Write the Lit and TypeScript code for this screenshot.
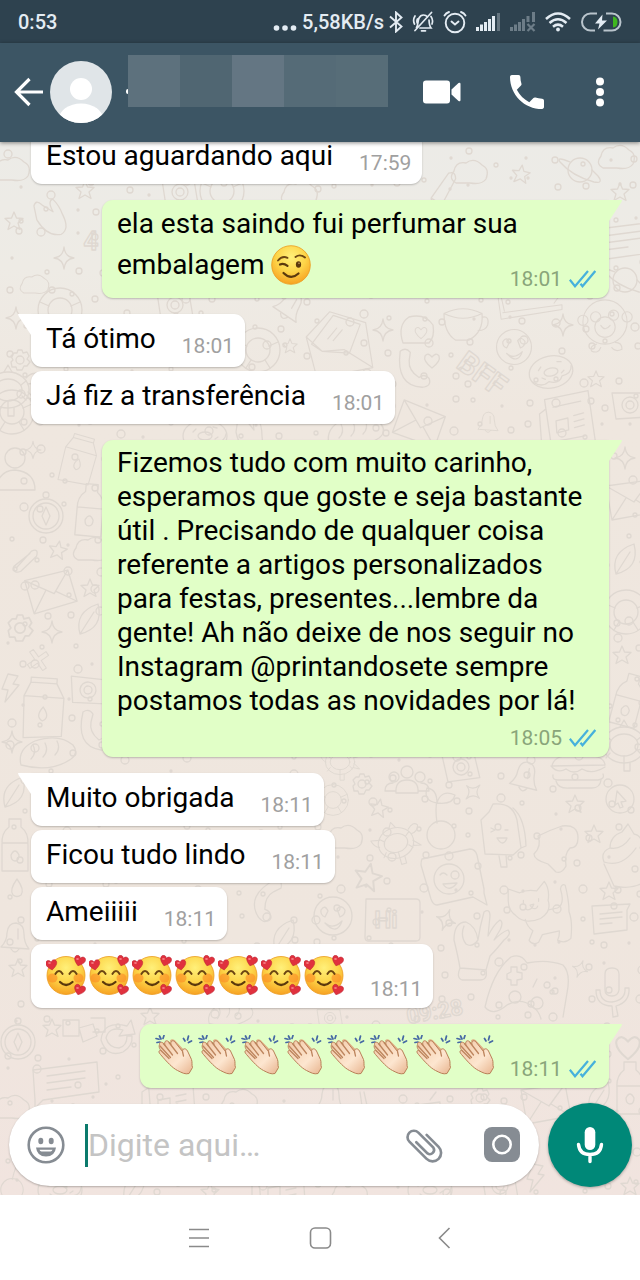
import { LitElement, html, svg, css } from "lit";
import { customElement } from "lit/decorators.js";

type Emoji = "wink" | "love" | "clap";

interface Message {
  from: "me" | "them";
  layout: "row" | "overlay" | "below";
  time: string;
  text?: string;
  emoji?: Emoji;
  count?: number;
  tail?: boolean;
}

const MESSAGES: Message[] = [
  { from: "them", layout: "row", time: "17:59", text: "Estou aguardando aqui" },
  { from: "me", layout: "overlay", time: "18:01", text: "ela esta saindo fui perfumar sua embalagem", emoji: "wink", count: 1, tail: true },
  { from: "them", layout: "row", time: "18:01", text: "Tá ótimo", tail: true },
  { from: "them", layout: "row", time: "18:01", text: "Já fiz a transferência" },
  {
    from: "me",
    layout: "below",
    time: "18:05",
    tail: true,
    text: "Fizemos tudo com muito carinho, esperamos que goste e seja bastante útil . Precisando de qualquer coisa referente a artigos personalizados para festas, presentes...lembre da gente! Ah não deixe de nos seguir no Instagram @printandosete sempre postamos todas as novidades por lá!",
  },
  { from: "them", layout: "row", time: "18:11", text: "Muito obrigada", tail: true },
  { from: "them", layout: "row", time: "18:11", text: "Ficou tudo lindo" },
  { from: "them", layout: "row", time: "18:11", text: "Ameiiiii" },
  { from: "them", layout: "row", time: "18:11", emoji: "love", count: 7 },
  { from: "me", layout: "row", time: "18:11", emoji: "clap", count: 8, tail: true },
];

/* ---------- emoji ---------- */

const heart = (x: number, y: number, r: number) => svg`
  <path transform="translate(${x} ${y}) rotate(${r})" fill="#e0313e" stroke="#b81f30" stroke-width=".5"
    d="M0 5C-5 1.500-6-1-5.300-3.200C-4.400-5.600-1-5.400 0-2.800C1-5.400 4.400-5.600 5.300-3.200C6-1 5 1.500 0 5Z"/>
  <ellipse cx="${x - 2}" cy="${y - 2}" rx="1.400" ry=".9" fill="#f57a80"/>`;

const emojiArt = {
  wink: svg`
    <circle cx="20" cy="20" r="19.300" fill="url(#face)" stroke="#eb9a1e" stroke-width=".8"/>
    <path d="M7 15.500Q11 10.500 16.500 12.800" fill="none" stroke="#6b4512" stroke-width="1.900" stroke-linecap="round"/>
    <path d="M24.500 12Q29 8.500 34 12.500" fill="none" stroke="#6b4512" stroke-width="1.900" stroke-linecap="round"/>
    <path d="M9 19.500Q12.500 17.800 16.500 20.800" fill="none" stroke="#5b390d" stroke-width="2.200" stroke-linecap="round"/>
    <ellipse cx="27.500" cy="19.500" rx="2.600" ry="3.300" fill="#5b390d"/>
    <circle cx="28" cy="18.300" r=".8" fill="#c9a06a"/>
    <path d="M12.500 28Q20 35.500 27.500 28.500" fill="none" stroke="#5b390d" stroke-width="2.200" stroke-linecap="round"/>`,
  love: svg`
    <circle cx="20" cy="20.500" r="19" fill="url(#face)" stroke="#eb9a1e" stroke-width=".8"/>
    <ellipse cx="6.500" cy="23" rx="5" ry="4.500" fill="#fb8a24" opacity=".6"/>
    <ellipse cx="32.500" cy="23" rx="5" ry="4.500" fill="#fb8a24" opacity=".6"/>
    <path d="M9.500 18.800Q13 13.300 16.500 18.800M23.500 18.800Q27 13.300 30.500 18.800" fill="none" stroke="#6b4512" stroke-width="2.100" stroke-linecap="round"/>
    <path d="M14 27Q20 33 26.500 27" fill="none" stroke="#5b390d" stroke-width="2.300" stroke-linecap="round"/>
    ${heart(5.5, 10, -8)}${heart(33.5, 6, 18)}${heart(33.5, 35, 18)}`,
  clap: svg`
    <path d="M1 3.500l3 .8M4.500 1l1.500 3M9 .5l-1 3M2 7.500l3-.5M28.500 3.500l1.500 2.500M33.500 1l-1 4M36.500 6l-3 1.500" stroke="#4568a4" stroke-width="1.700" stroke-linecap="round" fill="none"/>
    <path d="M15 5.500C17 3 20 5 21.500 7L33 19L37 31L31 38L22 32Z" fill="#dfae84"/>
    <path d="M4.500 9.500C4 7 7 6.500 8.500 8.500L10 10.500C9 7 10.500 4.500 13.500 6.500L16 9.500C15 6 18 4.500 20 7L27.500 16.500C27.500 13 31 13 32.500 16L36.500 24.500C37.500 27.500 36.500 30 37.500 32.500L34 38.500C30 39.500 27.500 38 22.500 35.500C17.500 33 12 27 5.500 19.500C2.500 16.500 4.500 14.500 6.500 16C3 12.500 4.500 10 4.500 9.500Z" fill="url(#skin)" stroke="#b98058" stroke-width="1" stroke-linejoin="round"/>
    <path d="M8.500 8.500L17.500 20M14 7.500L22.500 18.500M6.500 16L14 23.500M5 11L15.500 22.500M27.500 16.500L28.500 21" stroke="#bd855e" stroke-width="1.300" stroke-linecap="round" fill="none"/>`,
};

const EMOJI_NAMES: Record<Emoji, string> = { wink: "piscando", love: "sorriso com corações", clap: "palmas" };

/* ---------- wallpaper doodles ---------- */

const at = (x: number, y: number, art: unknown, rot = 0, scale = 1) =>
  svg`<g transform="translate(${x} ${y}) rotate(${rot}) scale(${scale})">${art}</g>`;
const p = (d: string) => svg`<path d=${d}/>`;
const c = (x: number, y: number, r: number) => svg`<circle cx=${x} cy=${y} r=${r}/>`;

const D = {
  star: p("M0-9L2.500-3L9-2.500L4 2L6 8.500L0 5L-6 8.500L-4 2L-9-2.500L-2.500-3Z"),
  sparkle: p("M0-11Q1-1 10 0Q1 1 0 11Q-1 1-10 0Q-1-1 0-11Z"),
  gear: svg`${c(0, 0, 4)}${p("M-2-10H2L3-7L7-8L9-4L7-1L10 2L7 6L4 6L2 10H-3L-4 7L-8 7L-9 2L-7 0L-9-4L-6-7L-3-7Z")}`,
  people: svg`${c(-13, -3, 5)}${c(0, -8, 6)}${c(13, -3, 5)}${p("M-11 13Q-12 0 0 0Q12 0 11 13ZM-12 11H-22Q-22 3-14 3M12 11H22Q22 3 14 3")}`,
  camera: svg`${p("M-18-12H14L18 12L-14 14Z")}${c(0, 0, 8)}${c(0, 0, 4)}`,
  bell: p("M-14 10Q-8 4-8-4Q-7-14 1-14Q9-13 9-3Q9 6 14 12ZM-4 12Q0 18 4 12M3-8V2"),
  burger: p("M-26-6Q-24-18 0-17Q26-18 27-7ZM-27-6Q-20 2-12-3Q-4 3 4-3Q14 3 27-5M-25 3Q-26 8-20 8H20Q27 7 25 2M-22 9Q-20 17-8 16H14Q22 16 23 8"),
  compass: svg`${c(0, 0, 17)}${c(0, 0, 13)}${c(0, -21, 3)}${p("M0-9L4 0L0 9L-4 0Z")}`,
  cursor: svg`${c(0, 0, 14)}${p("M-3-8L6 2L1 3L3 8L0 9L-2 4L-5 6Z")}`,
  turtle: svg`<ellipse rx="21" ry="18"/><ellipse rx="14" ry="11"/>${p("M18-12Q26-20 30-14Q28-6 20-6M-18-8L-28-10Q-26-2-20 0M0 18V26H6V18M-4-18L0-25L4-18M19 8L28 10L20 2M-14 8L-18 13M0 11V18M14 6L18 10M13-5L18-9M-13-5L-18-9")}`,
  plant: svg`${c(4, 22, 14)}${p("M0 10Q-2-4 0-12M0-10Q-14-12-10-25Q0-24 0-10Q4-24 18-18Q16-8 0-10")}`,
  popsicle: p("M-18 20L-22-14L-14-22L-10-30Q10-32 14-14L18 14L10 21ZM10-26Q22-16 23 12L18 14M-4 22L-2 33H4L3 21M-12-6L-8-4L-12-2M2-4H5M-6 4Q0 14 4 4Z"),
  tooth: p("M-18-14Q-6-20 6-24Q22-26 22-12Q22-2 14-2Q8 4 10 16Q6 24 0 22L-8 14Q-22 10-22 4Q-14-4-18-14Z"),
  faceNote: svg`${p("M-31-20L17-30Q22-30 24-24L31 10V14L34 26L20 18L-16 26Q-20 26-22 20L-32-14Q-32-18-31-20")}${c(-4, 0, 15)}${p("M-13-4Q-10-8-6-4M-10 5Q-4 14 4 4Z")}${c(2, -4, 4)}`,
  cat: p("M-24-8L-24-20L-12-16Q-4-20 6-18L14-28Q20-20 18-8Q22 4 10 11Q-6 18-16 8Q-24 2-24-8ZM-8-8V-5M8-10V-7M-1-3L3-4L1 0ZM1 0Q-4 4-6 0M1 0Q6 2 7-2M-6 12Q-4 20 2 24L-2 34Q2 40 8 36L12 28L30 24Q30 30 28 34Q36 38 42 32Q44 14 40 4Q40-8 36-24Q32-26 31-20Q36-4 28 0L18 2"),
  smile: svg`${c(0, 0, 19)}${p("M-12-6Q-8-12-5-5L-8 1Q-13-1-12-6ZM4-7Q8-12 12-6Q12-1 7 1ZM-8 7Q0 14 9 5Q4 20-8 7Z")}`,
  box: p("M-26-20H24Q28-20 28-16V18Q28 22 24 22H-24Q-27 22-27 18Z"),
  ok: p("M-16 24Q-18 12-22-4Q-22-22-10-22Q0-18 2-4Q-4 4-10 0Q-16-8-12-18M2-4Q4-18 8-32Q14-36 14-28L12-8Q18-20 24-24Q28-22 24-14L18-4Q26-12 32-14Q36-10 28-4Q20 6 14 12L10 26M-16 24Q-20 34-14 36H4Q12 36 10 26Z"),
  note: p("M-18-14L20-16L17-10V10L-16 14ZM-10-6L12-8M-10-1L12-3M-10 4L2 3"),
  gamepad: svg`${p("M-42 24Q-34-12-16-26Q-6-30 0-20Q20-24 36-18Q44-10 40 10L36 34M-42 24Q-34 34-20 22Q-6 14 6 24Q12 28 14 36M-16-16L-10-16V-11L-5-10V-4L-10-3V2L-16 2V-3L-20-4V-9L-16-11Z")}${c(-12, 14, 6)}${c(10, 20, 6)}${c(20, 2, 3)}${c(28, 8, 3)}${p("M6 4L10-4")}`,
  mic: p("M-7-18Q-7-24 0-24Q7-24 7-18V-2Q6 4 0 4Q-7 4-7-2ZM-12-2Q-12 10 0 10Q14 8 13-4L17-4Q18 10 4 14L6 24L1 25L0 14Q-16 14-16-2Z"),
  cupcake: p("M-18 6Q-22-4-12-8Q-12-20 0-24L6-32L12-22Q22-20 18-8L24 2M-18 6Q0 12 14-8M-12-8Q0-6 8-18M-18 8L-8 30Q10 34 22 26"),
  letter: p("M-32-10L-6-38L34-26L42 24L-20 36ZM-26-2L-2-34L28-24L16 8L-14 6ZM-32-10L-14 6L10 4L42 24M-8-8L2-20M-2-6L8-18"),
  heart: p("M0 7Q-9 0-7-5Q-4-9 0-4Q4-9 7-5Q9 0 0 7Z"),
  head: svg`${p("M-14 12Q-20-6-8-14Q8-18 16-6Q18 6 12 12Z")}`,
  cup: p("M-20-10Q0-20 20-10Q22 10 6 18H-8Q-20 10-20-10ZM-20-10Q0 0 20-10M20-6Q28-8 26 2Q24 8 16 8"),
  laptop: p("M-40-14L-36 14L40 2V-4L-34 6M-36-14L-32 4M36-14L30-6"),
  monkey: svg`${c(0, 0, 26)}${c(-11, -6, 6)}${c(10, -8, 6)}${c(-26, -2, 6)}${c(26, -6, 6)}${c(0, 6, 12)}${p("M-5 4Q0 12 6 4M-10 26Q-18 28-16 34Q-8 38-5 30M12 24Q20 24 20 32Q12 36 8 30")}`,
  phone: p("M-12-18Q-6-22-2-16L-4-8Q-6 2 4 10Q10 6 14 12Q16 20 6 20Q-20 16-12-18Z"),
  donut: svg`<ellipse rx="22" ry="16"/><ellipse rx="7" ry="4"/>${p("M-20 6Q-12 14-4 9Q6 14 10 6Q20 6 21-2M-12-4L-9-7M8-9L12-8M10 3L13 1M-10 4L-7 6")}`,
  news: p("M-22-22L22-28L26 26L-18 30ZM-22-12L-28-8V24Q-24 32-18 30M-14-14L14-18M-12 0L0-2V10L-12 12ZM6-4L16-6M6 2L16 0M6 8L16 6M-10 20L16 17"),
  envelope: p("M-24-14L20-20L26 12L-18 20ZM-24-14L4 2L20-20M-18 20L-4-2M26 12L6 0"),
  cloud: p("M-14 10Q-22 6-16-2Q-14-12-4-10Q4-16 12-8Q20-4 16 6Q12 12 0 10Z"),
  planet: svg`${c(0, 0, 12)}${p("M-10-8Q-24-14-20-8Q-8 6 14 12Q24 14 18 6L12 0")}`,
  pencil: p("M-4 20L-8 10L4-18Q10-22 12-14L4 14ZM-8 10L4 14"),
  leaf: p("M-10 14Q-16-8 8-16Q14 8-10 14ZM-10 14L4-8"),
  bottle: p("M-6-26H6V-18Q14-12 13 0V26H-13V0Q-14-12-6-18ZM-13-2H13M-4 10Q0 2 4 10Q4 16 0 16Q-4 16-4 10Z"),
  drop: p("M0-9Q8 2 4 7Q0 10-4 7Q-8 2 0-9Z"),
  carton: p("M-20-14L-14-28H12L20-14V24L-18 28ZM-20-14H20M-14-28V-33H12V-28M0-4Q8 6 0 10Q-8 6 0-4Z"),
  cross: p("M-8-12L0-4L8-12L12-8L4 0L12 8L8 12L0 4L-8 12L-12 8L-4 0L-12-8Z"),
  bolt: p("M-2-14L8-12L3-4L9-3L-5 14L-2 2L-8 1Z"),
  bread: p("M-26 12Q-30-4-12-12Q12-20 26-8Q32 0 24 6Q4 20-26 12ZM-14-8Q-10 0-16 6M-2-10Q2-2-4 4M10-12Q14-4 8 2"),
  person: svg`${c(0, -12, 10)}${p("M-20 20Q-16 0 0 0Q20 2 20 20Z")}`,
  clip: p("M-12 6L6-8Q14-10 10-2L-8 10Q-16 12-14 4L4-6"),
  refresh: p("M10-12Q-14-18-16 2Q-10 20 6 14Q16 8 15-2L10-2Q10 8 2 10Q-8 10-11 0Q-8-12 6-8L2-2L18-4L14-18Z"),
  blocks: p("M-22-12H-6V4H-22ZM-6-4L8-8L12 4L-2 10ZM6-14H20V0H8"),
  card: p("M-32-10L32-18L34 12L-22 20L-30 28L-30 20ZM-18-4L20-9M-18 3L20-2M-18 10L6 7"),
  hand: p("M-12-14Q-8-20-4-12L4-2Q2-14 8-14Q12-6 12 4Q14 20 4 22Q-10 20-14 0Z"),
  life: svg`${c(0, 0, 22)}${c(0, 0, 12)}${p("M-20-8L-11-4M20-8L11-4M-12 18L-7 10M12 18L7 10")}`,
};

const word = (t: string, x: number, y: number, rot: number, size: number) =>
  svg`<text class="scribble" transform="translate(${x} ${y}) rotate(${rot})" font-size=${size} text-anchor="middle">${t}</text>`;

const DOODLES = [
  at(470, 173, D.cloud), at(521, 174, D.star, 8), at(580, 170, D.planet), at(617, 158, D.cloud), at(441, 190, D.pencil, 12),
  at(222, 191, D.life), at(180, 192, D.camera), at(300, 194, D.cloud), at(14, 221, D.star), at(50, 215, D.hand, -20),
  at(35, 285, D.cloud, 0, 0.8), at(12, 170, D.cloud), at(64, 258, D.sparkle), word("4", 91, 250, 0, 26), at(85, 190, D.star),
  at(620, 192, D.star), at(622, 240, D.card), at(625, 280, D.planet), at(16, 318, D.sparkle), at(60, 310, D.life), at(290, 305, D.bell, 30), at(175, 305, D.camera),
  at(8, 390, D.turtle), at(20, 360, D.gear), at(258, 350, D.life), at(335, 346, D.letter, 0, 0.9), at(383, 330, D.sparkle),
  at(417, 331, D.head), at(421, 333, D.heart, 0, 0.8), at(463, 323, D.cup, 0, 0.95), at(530, 308, D.laptop, 0, 0.8), at(605, 322, D.monkey, 0, 0.85),
  at(514, 347, D.smile, 0, 0.92), at(414, 368, D.phone, -6), at(432, 361, D.heart), word("BFF", 476, 382, 36, 30),
  at(551, 372, D.donut, -12), at(568, 420, D.news, -4), at(290, 346, D.star, 0, 0.8), at(596, 379, D.star, 0, 0.9), at(563, 325, D.sparkle),
  at(418, 424, D.envelope, 30), at(488, 422, D.bell, 0, 0.7), at(630, 405, D.camera), at(355, 432, D.bread), at(250, 432, D.hand), at(205, 436, D.donut), at(12, 412, D.life),
  at(15, 470, D.person), at(33, 450, D.sparkle, 0, 0.8), at(78, 462, D.carton, 16, 0.8), at(46, 516, D.compass), at(90, 510, D.bottle, 5), at(27, 560, D.clip, -10),
  at(58, 550, D.star, 10), at(92, 550, D.cloud), at(50, 592, D.envelope, -6), at(90, 588, D.star), at(20, 628, D.gear, 0, 1.3), at(52, 632, D.sparkle),
  at(90, 620, D.leaf), at(38, 660, D.cross, 10, 0.8), at(10, 688, D.bolt), at(43, 711, D.carton, 4), at(88, 690, D.camera, 6), at(95, 730, D.phone), at(47, 753, D.bread), at(12, 742, D.sparkle),
  at(625, 458, D.sparkle), at(630, 500, D.envelope), at(626, 560, D.leaf), at(626, 612, D.life), at(622, 655, D.star), at(628, 700, D.bottle, 15), at(624, 745, D.turtle),
  at(15, 793, D.leaf), at(15, 845, D.bottle), at(17, 888, D.drop), at(15, 937, D.bell), at(18, 968, D.star),
  at(340, 762, D.turtle, 0, 0.7), at(333, 800, D.life, 0, 0.7), at(362, 784, D.gear), at(407, 780, D.people), at(461, 767, D.camera, -4), at(473, 792, D.sparkle, 45, 0.9), at(525, 776, D.bell, 10),
  at(578, 772, D.burger), at(620, 799, D.cursor), at(379, 808, D.star, 10), at(575, 804, D.star), at(594, 834, D.star), at(609, 891, D.star),
  at(368, 877, D.star, 12, 1.5), at(396, 843, D.turtle, -15, 0.85), at(437, 813, D.plant), at(503, 834, D.popsicle), at(556, 850, D.tooth),
  at(453, 879, D.faceNote), at(531, 908, D.cat, 0, 0.95), at(333, 916, D.smile), at(392, 919, D.box), word("Hi", 386, 928, 0, 24), at(446, 920, D.sparkle, 20),
  at(476, 944, D.ok), at(610, 920, D.note), at(527, 983, D.gamepad), at(612, 992, D.mic), at(622, 856, D.cupcake), at(580, 969, D.sparkle, 20, 0.8),
  word("09:28", 436, 1019, -10, 22), at(345, 838, D.cloud), at(270, 900, D.phone, 50), at(285, 936, D.leaf),
  at(18, 1042, D.compass), at(52, 1028, D.star), at(85, 1032, D.blocks), at(117, 1038, D.refresh), at(65, 1080, D.card), at(150, 1016, D.star), at(230, 1014, D.bread, 0, 0.8),
  at(330, 1018, D.camera, 0, 0.7), at(628, 1048, D.heart, 0, 1.6), at(630, 1088, D.bottle), at(12, 1108, D.cloud), at(170, 1100, D.news), at(240, 1102, D.cloud), at(330, 1098, D.bell),
  at(400, 1106, D.laptop), at(480, 1098, D.gear), at(545, 1104, D.envelope), at(600, 1098, D.leaf), at(15, 1172, D.plant, 20, 0.8), at(60, 1190, D.donut), at(135, 1188, D.leaf), at(210, 1192, D.star),
  at(280, 1188, D.news), at(350, 1194, D.cloud), at(430, 1190, D.donut), at(500, 1186, D.camera), at(535, 1178, D.bolt), at(630, 1186, D.star),
];

/* Small rings and dots that fill the space between the doodles, on a jittered grid. */
const RINGS = (() => {
  const out: unknown[] = [];
  let seed = 17;
  const next = () => (seed = (seed * 16807) % 2147483647) / 2147483647;
  for (let y = 150; y < 1195; y += 27) {
    for (let x = 8; x < 640; x += 27) {
      out.push(c(Math.round(x + next() * 18), Math.round(y + next() * 18), 1 + Math.round(next() * 3)));
    }
  }
  return out;
})();

@customElement("app-root")
export class AppRoot extends LitElement {
  static styles = css`
    :host {
      display: flex;
      flex-direction: column;
      height: 100vh;
      font-family: Roboto, "Liberation Sans", sans-serif;
      background: #fff;
      color: #000;
    }
    *, *::before, *::after { box-sizing: border-box; }
    svg { display: block; flex: none; }
    button {
      border: 0;
      padding: 0;
      background: none;
      color: inherit;
      display: grid;
      place-items: center;
      flex: none;
      cursor: pointer;
    }
    .defs { position: absolute; width: 0; height: 0; }

    .status {
      display: flex;
      align-items: center;
      gap: 9px;
      height: 43px;
      flex: none;
      padding: 0 18px;
      background: #2e424f;
      color: #e4ecf3;
      font-size: 20px;
      line-height: 24px;
      font-weight: 500;
    }
    .clock { flex: 1; }
    .rate { display: flex; align-items: center; gap: 5px; }

    .bar {
      position: relative;
      z-index: 1;
      display: flex;
      align-items: center;
      height: 99px;
      flex: none;
      padding: 0 17px 2px 13px;
      background: #3c5564;
      color: #fff;
      box-shadow: 0 1px 4px rgba(0, 0, 0, 0.45);
    }
    .avatar { margin: 0 14px 0 6px; }
    .speck { width: 2px; height: 5px; border-radius: 2px 0 0 2px; background: #fff; }
    .name {
      display: grid;
      grid-template-columns: repeat(5, 1fr);
      flex: 0 1 260px;
      height: 52px;
      margin-bottom: 22px;
    }
    .t1 { background: #5d717d; }
    .t2 { background: #506672; }
    .t3 { background: #647683; }
    .t4 { background: #556b77; }
    .t5 { background: #576d78; }
    .actions { display: flex; flex: 1; justify-content: flex-end; gap: 49px; }

    .chat {
      position: relative;
      display: flex;
      flex-direction: column;
      flex: 1;
      min-height: 0;
      overflow: hidden;
      background: linear-gradient(#ecebe7, #eeebe5 12%, #efe7df 26%, #efe6de 75%, #f1e4df);
    }
    .wallpaper {
      position: absolute;
      inset: 0;
      width: 100%;
      height: 100%;
      fill: none;
      stroke: #dfd8d1;
      stroke-width: 1.300;
      stroke-linejoin: round;
      stroke-linecap: round;
    }
    .scribble { font-family: Roboto, sans-serif; font-weight: 700; }

    .log {
      position: relative;
      display: flex;
      flex-direction: column;
      justify-content: flex-end;
      flex: 1;
      min-height: 0;
      margin: 0;
      padding: 0 31px 15px;
      list-style: none;
    }
    .item { display: flex; flex: none; margin-top: 4px; }
    .item.first { margin-top: 16px; }
    .item.me { justify-content: flex-end; }
    .bubble {
      position: relative;
      max-width: calc(100% - 71px);
      padding: 8px 11px 7px 15px;
      border-radius: 11px;
      background: #fff;
      box-shadow: 0 1px 2px rgba(0, 0, 0, 0.22);
      font-size: 28px;
      line-height: 34px;
    }
    .me .bubble { background: #e1ffc7; padding-right: 13px; }
    .tail .bubble::before {
      content: "";
      position: absolute;
      top: 0;
      width: 14px;
      height: 21px;
      background: inherit;
    }
    .them.tail .bubble { border-top-left-radius: 0; }
    .them.tail .bubble::before { left: -13px; clip-path: polygon(0 0, 100% 0, 100% 100%, 93% 100%, 4% 10%); }
    .me.tail .bubble { border-top-right-radius: 0; }
    .me.tail .bubble::before { right: -13px; clip-path: polygon(0 0, 100% 0, 96% 10%, 7% 100%, 0 100%); }

    .row .bubble { display: flex; align-items: flex-end; gap: 26px; }
    .row .text { margin-bottom: 4px; }
    .row .meta { margin-bottom: 2px; }
    .row.emoji .bubble { padding-top: 11px; }
    .row.emoji .text { display: flex; gap: 3px; margin-bottom: 6px; }
    .row.emoji .meta { margin-bottom: 0; }
    .row.emoji.me .bubble { gap: 14px; }
    .overlay .bubble { display: grid; padding-top: 7px; }
    .overlay .text, .overlay .meta { grid-area: 1 / 1; }
    .overlay .text { margin-bottom: 6px; }
    .overlay .pic { display: inline-block; margin-top: 4px; vertical-align: -11px; }
    .below .bubble { display: flex; flex-direction: column; gap: 8px; padding-top: 6px; }

    .meta {
      display: flex;
      align-items: center;
      align-self: end;
      justify-self: end;
      gap: 7px;
      flex: none;
      color: #a0a0a0;
      font-size: 21px;
      line-height: 24px;
    }
    .me .meta { color: #89a57a; }

    .composer {
      position: relative;
      display: flex;
      align-items: center;
      gap: 9px;
      flex: none;
      padding: 0 8px 8px 9px;
    }
    .pill {
      display: flex;
      align-items: center;
      flex: 1;
      min-width: 0;
      height: 82px;
      padding: 0 18px;
      border-radius: 41px;
      background: #fff;
      color: #868c93;
      box-shadow: 0 1px 2px rgba(0, 0, 0, 0.25);
    }
    .field {
      flex: 1;
      min-width: 0;
      height: 43px;
      margin: 0 20px;
      padding: 0;
      border: 0;
      border-left: 3px solid #0b7a6c;
      outline: none;
      background: none;
      font: 32px/38px Roboto, "Liberation Sans", sans-serif;
      color: #000;
    }
    .field::placeholder { color: #c4c4c4; opacity: 1; }
    .camera { margin-left: 40px; }
    .talk {
      width: 84px;
      height: 84px;
      border-radius: 50%;
      background: #008878;
      color: #fff;
      box-shadow: 0 1px 3px rgba(0, 0, 0, 0.3);
    }

    .nav {
      display: flex;
      align-items: center;
      justify-content: center;
      gap: 82px;
      height: 85px;
      flex: none;
      background: #fff;
      color: #8a8a8a;
    }
    .nav button { width: 40px; height: 40px; }
  `;

  private emoji(kind: Emoji) {
    return html`<svg class="pic" width="40" height="40" viewBox="0 0 40 40" role="img" aria-label=${EMOJI_NAMES[kind]}>${emojiArt[kind]}</svg>`;
  }

  private message(m: Message) {
    const pics = m.emoji ? Array.from({ length: m.count ?? 1 }, () => this.emoji(m.emoji!)) : [];
    const onlyEmoji = m.text ? "" : "emoji";
    return html`
      <li class="item ${m.from} ${m.layout} ${m.tail ? "tail first" : ""} ${onlyEmoji}">
        <div class="bubble">
          <div class="text">${m.text ? (pics.length ? m.text + " " : m.text) : ""}${pics}</div>
          <div class="meta">
            <time>${m.time}</time>
            ${m.from === "me"
              ? html`<svg width="27" height="18" viewBox="0 0 27 18" fill="none" stroke="#46b1dc" stroke-width="2.200" role="img" aria-label="Lida">
                  <path d="M.8 9.800L6 16.300L19 1"/><path d="M11.500 13.800L13.500 16.300L26.300 1"/>
                </svg>`
              : ""}
          </div>
        </div>
      </li>`;
  }

  render() {
    return html`
      <svg class="defs" aria-hidden="true">
        <defs>
          <radialGradient id="face" cx=".5" cy=".3" r=".75">
            <stop offset="0" stop-color="#fff07a"/><stop offset=".5" stop-color="#fdd549"/><stop offset="1" stop-color="#f69a1c"/>
          </radialGradient>
          <linearGradient id="skin" x1="0" y1="0" x2="1" y2="1">
            <stop offset="0" stop-color="#f2c9a6"/><stop offset=".6" stop-color="#fde6d0"/><stop offset="1" stop-color="#e8b48e"/>
          </linearGradient>
        </defs>
      </svg>

      <div class="status">
        <span class="clock">0:53</span>
        <span class="rate">
          <svg width="24" height="24" viewBox="0 0 24 24" fill="currentColor"><circle cx="3.500" cy="18" r="2.800"/><circle cx="12" cy="18" r="2.800"/><circle cx="20.500" cy="18" r="2.800"/></svg>
          <span>5,58KB/s</span>
          <svg width="14" height="22" viewBox="0 0 14 22" fill="none" stroke="currentColor" stroke-width="1.900"><path d="M1 5.500L12.500 15.500L7 20.500V1.500L12.500 6.500L1 16.500"/></svg>
        </span>
        <svg width="22" height="22" viewBox="0 0 22 22" fill="none" stroke="currentColor" stroke-width="1.700" stroke-linecap="round">
          <path d="M4.500 16.500C6.500 14 5.500 10 7 7Q8.500 4 11.500 4Q14 4 15.500 6M17 9C17.200 13 17.500 15 19 17H8M9.500 19.800H13.500M19.500 1.500L3 19.500M3 5Q.5 9 2.500 13M19 5.500Q21.500 9 20 13M5.500 8Q4.500 10 5.200 12"/>
        </svg>
        <svg width="24" height="24" viewBox="0 0 24 24" fill="none" stroke="currentColor" stroke-width="1.900" stroke-linecap="round">
          <circle cx="12" cy="13" r="9.300"/><path d="M8.500 11.500L12 14.500L15.500 11.500M1.500 5.500Q3 3 6 2M22.500 5.500Q21 3 18 2"/>
        </svg>
        <svg width="25" height="20" viewBox="0 0 25 20" fill="currentColor">
          <rect x="0" y="15" width="3" height="4"/><rect x="4" y="12.500" width="3" height="6.500"/><rect x="8" y="10" width="3" height="9"/><rect x="12" y="7" width="3" height="12"/><rect x="16" y="4" width="3" height="15"/><rect x="21" y="1" width="3" height="18" opacity=".3"/>
        </svg>
        <svg width="26" height="20" viewBox="0 0 26 20" fill="currentColor" opacity=".35">
          <rect x="0" y="15" width="3" height="4"/><rect x="4" y="12.500" width="3" height="6.500"/><rect x="8" y="10" width="3" height="9"/><rect x="12" y="7" width="3" height="12"/><rect x="16.500" y="4" width="3" height="6"/><rect x="22" y="0" width="3" height="10"/>
          <path d="M17.500 12L24.500 19M24.500 12L17.500 19" stroke="currentColor" stroke-width="2.200"/>
        </svg>
        <svg width="26" height="20" viewBox="0 0 26 20" fill="none" stroke="currentColor" stroke-width="2.500">
          <path d="M1 7Q13-4 25 7M4.500 11Q13 3.500 21.500 11M8 14.700Q13 10.500 18 14.700"/><circle cx="13" cy="17.500" r="1.900" fill="currentColor" stroke="none"/>
        </svg>
        <svg width="42" height="20" viewBox="0 0 42 20" fill="none" stroke="#b9c4cc" stroke-width="2">
          <path d="M17 1.500H10.500A8.500 8.500 0 0 0 10.500 18.500H15M26 1.500H32A8.500 8.500 0 0 1 32 18.500H23.500"/>
          <path d="M33 4.500Q37.500 5 37.500 10Q37.500 15 33 15.500Z" fill="#3fb71f" stroke="none"/>
          <path d="M22.500 2.500L15 11.500H19.500L18 17.500L27 8.500H22Z" fill="#e4ecf3" stroke="none"/>
        </svg>
      </div>

      <header class="bar">
        <button aria-label="Voltar">
          <svg width="31" height="30" viewBox="0 0 31 30" fill="none" stroke="currentColor" stroke-width="3.200"><path d="M30 15H4M16.500 2L3.500 15L16.500 28"/></svg>
        </button>
        <svg class="avatar" width="62" height="62" viewBox="0 0 62 62" role="img" aria-label="Foto do contato">
          <clipPath id="round"><circle cx="31" cy="31" r="31"/></clipPath>
          <g clip-path="url(#round)"><rect width="62" height="62" fill="#e0e5e8"/><circle cx="31" cy="28" r="11" fill="#fff"/><ellipse cx="31" cy="58" rx="22" ry="15.500" fill="#fff"/></g>
        </svg>
        <span class="speck"></span>
        <div class="name"><span class="t1"></span><span class="t2"></span><span class="t3"></span><span class="t4"></span><span class="t5"></span></div>
        <div class="actions">
          <button aria-label="Chamada de vídeo">
            <svg width="38" height="24" viewBox="0 0 38 24" fill="currentColor"><rect y=".5" width="27" height="23" rx="3"/><path d="M28.500 9.500L35.500 3Q37.500 2 37.500 4V20Q37.500 22 35.500 21L28.500 14.500Z"/></svg>
          </button>
          <button aria-label="Ligar">
            <svg width="34" height="34" viewBox="3 3 18 18" fill="currentColor"><path d="M6.620 10.790c1.440 2.830 3.760 5.140 6.590 6.590l2.200-2.200c.27-.27.67-.36 1.020-.24 1.120.37 2.330.57 3.570.57.55 0 1 .45 1 1V20c0 .55-.45 1-1 1-9.390 0-17-7.610-17-17 0-.55.45-1 1-1h3.500c.55 0 1 .45 1 1 0 1.250.2 2.450.57 3.570.11.35.03.74-.25 1.020l-2.200 2.200z"/></svg>
          </button>
          <button aria-label="Mais opções">
            <svg width="30" height="30" viewBox="0 0 30 30" fill="currentColor"><circle cx="7" cy="4.500" r="4"/><circle cx="7" cy="15" r="4"/><circle cx="7" cy="25.500" r="4"/></svg>
          </button>
        </div>
      </header>

      <main class="chat">
        <svg class="wallpaper" viewBox="0 142 640 1053" preserveAspectRatio="xMidYMin slice" aria-hidden="true">${RINGS}${DOODLES}</svg>
        <ol class="log">${MESSAGES.map((m) => this.message(m))}</ol>
        <div class="composer">
          <div class="pill">
            <button aria-label="Emoji">
              <svg width="38" height="38" viewBox="0 0 38 38" fill="none" stroke="currentColor" stroke-width="2.600">
                <circle cx="19" cy="19" r="17.300"/><g fill="currentColor" stroke="none"><ellipse cx="13.800" cy="15" rx="2.500" ry="3.200"/><ellipse cx="24.200" cy="15" rx="2.500" ry="3.200"/><path fill-rule="evenodd" d="M9 21.500H29Q28 30.500 19 30.500Q10 30.500 9 21.500ZM12.500 23.700Q13 25.500 14.500 25.500H23.500Q25 25.500 25.500 23.700Z"/></g>
              </svg>
            </button>
            <input class="field" type="text" placeholder="Digite aqui…" aria-label="Mensagem" />
            <button aria-label="Anexar">
              <svg width="38" height="38" viewBox="-19 -19 38 38" fill="none" stroke="currentColor" stroke-width="2.500" stroke-linecap="round">
                <path transform="rotate(45) scale(1.060)" d="M-5-8.500H11A8 8 0 0 1 11 7.500H-12A6 6 0 0 1-12-4.500H8A4 4 0 0 1 8 3.300H-7"/>
              </svg>
            </button>
            <button class="camera" aria-label="Câmera">
              <svg width="38" height="36" viewBox="0 0 38 36"><rect x="1" width="36" height="35" rx="8" fill="currentColor"/><circle cx="19" cy="17.500" r="8.700" fill="none" stroke="#fff" stroke-width="2.600"/></svg>
            </button>
          </div>
          <button class="talk" aria-label="Gravar áudio">
            <svg width="30" height="38" viewBox="0 0 30 38" fill="none" stroke="currentColor" stroke-width="3.400" stroke-linecap="round">
              <rect x="9.700" y="1" width="10.600" height="23" rx="5.300" fill="currentColor" stroke="none"/><path d="M3.500 18.500Q4.500 28.500 15 28.500Q25.500 28.500 26.500 18.500M15 28.500V35.500"/>
            </svg>
          </button>
        </div>
      </main>

      <nav class="nav" aria-label="Sistema">
        <button aria-label="Recentes">
          <svg width="22" height="22" viewBox="0 0 22 22" stroke="currentColor" stroke-width="1.600"><path d="M2 2.500H22M2 11H22M2 19.500H22"/></svg>
        </button>
        <button aria-label="Início">
          <svg width="24" height="24" viewBox="0 0 24 24" fill="none" stroke="currentColor" stroke-width="1.600"><rect x="2.500" y="2" width="20" height="20" rx="4.500"/></svg>
        </button>
        <button aria-label="Voltar ao anterior">
          <svg width="18" height="24" viewBox="0 0 18 24" fill="none" stroke="currentColor" stroke-width="1.600"><path d="M16.500 2L6.500 12L16.500 22"/></svg>
        </button>
      </nav>
    `;
  }
}
